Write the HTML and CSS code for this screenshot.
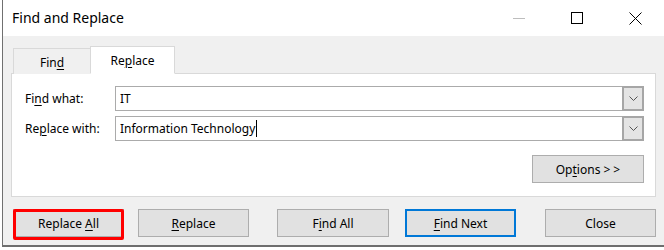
FILE: index.html
```html
<!DOCTYPE html>
<html>
<head>
<meta charset="utf-8">
<link rel="stylesheet" href="styles.css">
</head>
<body>
<div class="window">
  <div class="titlebar">
    <div class="title">Find and Replace</div>
    <div class="controls">
      <span class="ctl min"><svg width="13" height="13" viewBox="0 0 13 13"><line x1="0" y1="6.5" x2="12" y2="6.5" stroke="#bdbdbd" stroke-width="1"/></svg></span>
      <span class="ctl max"><svg width="13" height="13" viewBox="0 0 13 13"><rect x="0.5" y="0.5" width="11" height="11" fill="none" stroke="#000" stroke-width="1"/></svg></span>
      <span class="ctl close"><svg width="13" height="13" viewBox="0 0 13 13"><path d="M0.5 0.5 L12.5 12.5 M12.5 0.5 L0.5 12.5" stroke="#000" stroke-width="1" fill="none"/></svg></span>
    </div>
  </div>
  <div class="body">
    <div class="tabs">
      <div class="tab">Fin<u>d</u></div>
      <div class="tab active">Re<u>p</u>lace</div>
    </div>
    <div class="panel">
      <div class="row">
        <label class="label">Fi<u>n</u>d what:</label>
        <div class="combo">
          <span class="value">IT</span>
          <span class="drop"><svg width="9" height="6" viewBox="0 0 9 6"><path d="M0.5 0.5 L4.5 4.5 L8.5 0.5" stroke="#555" stroke-width="1" fill="none"/></svg></span>
        </div>
      </div>
      <div class="row">
        <label class="label">Re<u>p</u>lace with:</label>
        <div class="combo">
          <span class="value">Information Technology<span class="caret"></span></span>
          <span class="drop"><svg width="9" height="6" viewBox="0 0 9 6"><path d="M0.5 0.5 L4.5 4.5 L8.5 0.5" stroke="#555" stroke-width="1" fill="none"/></svg></span>
        </div>
      </div>
      <div class="opts-row">
        <button class="btn options">Op<u>t</u>ions <span class="arrows">&gt;&gt;</span></button>
      </div>
    </div>
    <div class="buttons">
      <button class="btn b1 highlighted">Replace <u>A</u>ll<span class="redbox"></span></button>
      <button class="btn b2"><u>R</u>eplace</button>
      <button class="btn b3">F<u>i</u>nd All</button>
      <button class="btn b4 default"><u>F</u>ind Next</button>
      <button class="btn b5">Close</button>
    </div>
  </div>
</div>
</body>
</html>
```
FILE: styles.css
```css
html, body {
  margin: 0;
  padding: 0;
  background: #ffffff;
}
body {
  width: 664px;
  height: 250px;
  overflow: hidden;
  font-family: "Noto Sans", "Open Sans", sans-serif;
  color: #000;
}
u {
  text-decoration: underline;
  text-underline-offset: 2px;
  text-decoration-thickness: 1px;
}
.window {
  margin-left: 2px;
  width: 662px;
  height: 247px;
  border-left: 1px solid #707070;
  border-bottom: 2px solid #6e6e6e;
  box-sizing: border-box;
  display: flex;
  flex-direction: column;
}
.titlebar {
  height: 36px;
  background: #fff;
  display: flex;
  align-items: center;
  justify-content: space-between;
  flex: none;
}
.title {
  font-size: 14px;
  padding-left: 9px;
  padding-bottom: 1px;
  color: #000;
}
.controls {
  display: flex;
  align-items: center;
  height: 36px;
}
.ctl {
  display: flex;
  align-items: center;
  justify-content: center;
  width: 58px;
  height: 36px;
}
.ctl svg { display: block; }
.body {
  flex: 1;
  background: #f0f0f0;
  padding: 10px 0 0 8px;
  display: flex;
  flex-direction: column;
}
.tabs {
  display: flex;
  align-items: flex-end;
  padding-left: 2px;
  height: 28px;
  position: relative;
  z-index: 1;
  margin-bottom: -1px;
}
.tab {
  font-size: 12px;
  height: 26px;
  box-sizing: border-box;
  border: 1px solid #d9d9d9;
  border-bottom: none;
  border-right: none;
  background: #f0f0f0;
  width: 77px;
  display: flex;
  align-items: center;
  justify-content: center;
  padding-top: 2px;
}
.tab.active {
  height: 28px;
  width: 85px;
  background: #fff;
  border-right: 1px solid #d9d9d9;
  border-bottom: 1px solid #fff;
  padding-top: 0;
}
.panel {
  width: 645px;
  height: 124px;
  box-sizing: border-box;
  background: #fff;
  border: 1px solid #d9d9d9;
  padding: 12px 11px 0 13px;
  display: flex;
  flex-direction: column;
}
.row {
  display: flex;
  align-items: center;
  height: 25px;
  margin-bottom: 5px;
}
.label {
  font-size: 12px;
  width: 90px;
  flex: none;
}
.combo {
  flex: 1;
  height: 25px;
  box-sizing: border-box;
  border: 1px solid #ababab;
  display: flex;
  align-items: center;
  justify-content: space-between;
  background: #fff;
}
.value {
  font-size: 12px;
  padding-left: 4px;
  display: flex;
  align-items: center;
}
.caret {
  display: inline-block;
  width: 1px;
  height: 17px;
  background: #000;
  margin-left: 1px;
}
.drop {
  width: 22px;
  height: 25px;
  box-sizing: border-box;
  margin: -1px -1px -1px 0;
  border: 2px solid #a6a6a6;
  background: #e4e4e4;
  display: flex;
  align-items: center;
  justify-content: center;
}
.drop svg { display: block; }
.opts-row {
  display: flex;
  justify-content: flex-end;
  margin-top: 9px;
}
.btn {
  font-family: "Noto Sans", "Open Sans", sans-serif;
  font-size: 12px;
  color: #000;
  height: 28px;
  width: 111px;
  box-sizing: border-box;
  background: #e1e1e1;
  border: 1px solid #adadad;
  padding: 0;
  margin: 0;
  position: relative;
}
.arrows { letter-spacing: 3px; margin-right: -3px; }
.options { width: 112px; }
.buttons {
  display: flex;
  margin-top: 12px;
  padding-left: 2px;
}
.b1 { margin-right: 14px; }
.b2 { margin-right: 28px; }
.b3 { margin-right: 16px; width: 112px; }
.b4 { margin-right: 29px; }
.default {
  border: 2px solid #0078d7;
}
.redbox {
  position: absolute;
  left: -1px;
  top: -1px;
  right: -1px;
  bottom: -4px;
  border: 3px solid #ff0000;
  border-radius: 2px;
}
```
